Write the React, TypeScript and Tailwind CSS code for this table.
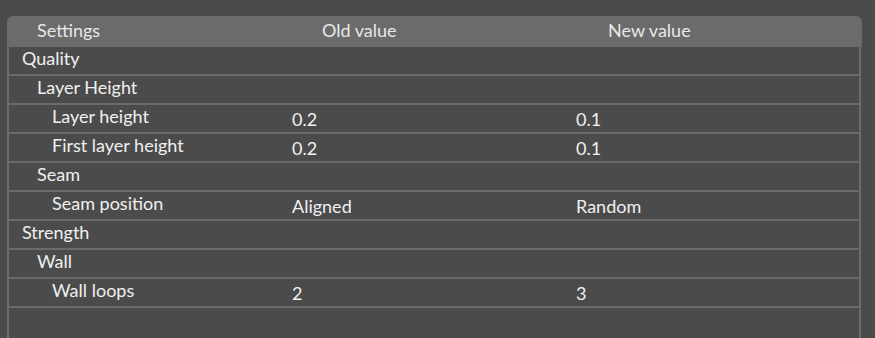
const rows = [
  { label: "Quality", level: 0, oldValue: "", newValue: "" },
  { label: "Layer Height", level: 1, oldValue: "", newValue: "" },
  { label: "Layer height", level: 2, oldValue: "0.2", newValue: "0.1" },
  { label: "First layer height", level: 2, oldValue: "0.2", newValue: "0.1" },
  { label: "Seam", level: 1, oldValue: "", newValue: "" },
  { label: "Seam position", level: 2, oldValue: "Aligned", newValue: "Random" },
  { label: "Strength", level: 0, oldValue: "", newValue: "" },
  { label: "Wall", level: 1, oldValue: "", newValue: "" },
  { label: "Wall loops", level: 2, oldValue: "2", newValue: "3" },
];

const indent = ["pl-[13px]", "pl-[28px]", "pl-[43px]"];

export default function App() {
  return (
    <div
      className="h-[338px] w-[875px] overflow-hidden bg-[#4b4b4b] pl-[7px] pt-[16px] text-[18px] leading-none text-[#f0f0f0]"
      style={{ fontFamily: "Lato, 'Open Sans', sans-serif" }}
    >
      <div className="w-[855px]">
        <div className="flex h-[31px] items-center rounded-t-[6px] bg-[#6b6b6b] pb-[4px] text-[#e8e8e8]">
          <div className="w-[277px] pl-[30px]">Settings</div>
          <div className="w-[284px] pl-[38px]">Old value</div>
          <div className="flex-1 pl-[40px]">New value</div>
        </div>
        <div className="h-[300px] w-[854px] border-x-2 border-[#6b6b6b] bg-[#4b4b4b]">
          {rows.map((row) => (
            <div key={row.label} className="flex h-[29px] items-center border-b-2 border-[#6b6b6b] pb-[5px]">
              <div className={`w-[275px] ${indent[row.level]}`}>{row.label}</div>
              <div className="w-[284px] pl-[8px] pt-[6px]">{row.oldValue}</div>
              <div className="flex-1 pl-[8px] pt-[6px]">{row.newValue}</div>
            </div>
          ))}
        </div>
      </div>
    </div>
  );
}
